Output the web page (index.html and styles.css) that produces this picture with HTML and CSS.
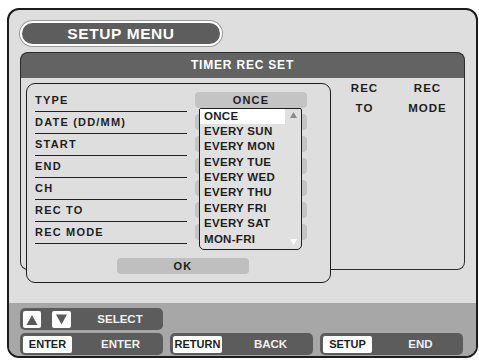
FILE: index.html
```html
<!DOCTYPE html>
<html>
<head>
<meta charset="utf-8">
<link rel="stylesheet" href="styles.css">
</head>
<body>
<div class="screen">
  <div class="title">SETUP MENU</div>
  <div class="panel">
    <div class="panel-head">TIMER REC SET</div>
    <div class="panel-body">
      <div class="dialog">
        <div class="rows">
          <div class="row"><span class="label">TYPE</span><span class="value">ONCE</span></div>
          <div class="row"><span class="label">DATE (DD/MM)</span><span class="value"></span></div>
          <div class="row"><span class="label">START</span><span class="value"></span></div>
          <div class="row"><span class="label">END</span><span class="value"></span></div>
          <div class="row"><span class="label">CH</span><span class="value"></span></div>
          <div class="row"><span class="label">REC TO</span><span class="value"></span></div>
          <div class="row"><span class="label">REC MODE</span><span class="value"></span></div>
        </div>
        <div class="ok">OK</div>
        <div class="dropdown">
          <ul class="dd-list">
            <li class="dd-item selected">ONCE</li>
            <li class="dd-item">EVERY SUN</li>
            <li class="dd-item">EVERY MON</li>
            <li class="dd-item">EVERY TUE</li>
            <li class="dd-item">EVERY WED</li>
            <li class="dd-item">EVERY THU</li>
            <li class="dd-item">EVERY FRI</li>
            <li class="dd-item">EVERY SAT</li>
            <li class="dd-item">MON-FRI</li>
          </ul>
          <div class="dd-scroll">
            <svg class="dd-arrow" width="7" height="6" viewBox="0 0 7 6"><polygon points="0,6 7,6 3.5,0" fill="#8a8a8a"/></svg>
            <svg class="dd-arrow" width="7" height="6" viewBox="0 0 7 6"><polygon points="0,0 7,0 3.5,6" fill="#ffffff"/></svg>
          </div>
        </div>
      </div>
      <div class="cols">
        <div class="col">REC<br>TO</div>
        <div class="col">REC<br>MODE</div>
      </div>
    </div>
  </div>
  <div class="keys">
    <div class="key-row">
      <div class="key">
        <span class="btn arrow"><svg width="18" height="17" viewBox="0 0 18 17"><polygon points="3.5,14 14.5,14 9,4" fill="#5a5a5a"/></svg></span>
        <span class="btn arrow second"><svg width="19" height="17" viewBox="0 0 19 17"><polygon points="4,3.5 15,3.5 9.5,13.5" fill="#5a5a5a"/></svg></span>
        <span class="key-label">SELECT</span>
      </div>
    </div>
    <div class="key-row">
      <div class="key"><span class="btn">ENTER</span><span class="key-label">ENTER</span></div>
      <div class="key"><span class="btn">RETURN</span><span class="key-label">BACK</span></div>
      <div class="key"><span class="btn">SETUP</span><span class="key-label">END</span></div>
    </div>
  </div>
</div>
</body>
</html>
```

FILE: styles.css
```css
body {
  margin: 0;
  background: #ffffff;
  font-family: "Liberation Sans", Arial, sans-serif;
  font-weight: bold;
  color: #1e1e1e;
}

.screen {
  margin: 8px 0 0 7px;
  width: 471px;
  height: 350px;
  box-sizing: border-box;
  border: 2px solid #1c1c1c;
  border-radius: 12px;
  background: #dedede;
  display: flex;
  flex-direction: column;
  overflow: hidden;
}

.title {
  margin: 11px 0 0 11px;
  width: 202px;
  height: 25px;
  box-sizing: border-box;
  border: 2px solid #ffffff;
  border-radius: 13px;
  background: #5d5d5d;
  box-shadow: 0 0 0 1px #9a9a9a;
  color: #ffffff;
  font-size: 15.5px;
  letter-spacing: 0.6px;
  line-height: 21px;
  text-align: center;
}

.panel {
  margin: 6px 0 0 11px;
  width: 445px;
}

.panel-head {
  height: 26px;
  box-sizing: border-box;
  border: 1.5px solid #2b2b2b;
  border-bottom: none;
  border-radius: 8px 8px 0 0;
  background: #636363;
  color: #ffffff;
  font-size: 12px;
  letter-spacing: 0.8px;
  line-height: 25px;
  text-align: center;
}

.panel-body {
  height: 192px;
  box-sizing: border-box;
  border: 1.5px solid #2b2b2b;
  border-top: none;
  border-radius: 0 0 8px 8px;
  display: flex;
  align-items: flex-start;
}

.dialog {
  position: relative;
  margin: 5px 0 0 4.5px;
  width: 305px;
  height: 200px;
  flex: none;
  box-sizing: border-box;
  border: 1.5px solid #1e1e1e;
  border-radius: 9px;
  background: #dedede;
  padding: 5.5px 0 0 8.5px;
}

.rows {
  display: flex;
  flex-direction: column;
}

.row {
  display: flex;
  height: 22px;
}

.label {
  width: 152px;
  height: 22px;
  box-sizing: border-box;
  border-bottom: 1.5px solid #222222;
  font-size: 11px;
  letter-spacing: 1.2px;
  line-height: 21px;
}

.value {
  margin: 2px 0 0 8px;
  width: 112px;
  height: 16px;
  border-radius: 4px;
  background: #c4c4c4;
  font-size: 11px;
  letter-spacing: 1.2px;
  line-height: 16px;
  text-align: center;
}

.ok {
  margin: 14px 0 0 82px;
  width: 132px;
  height: 16px;
  border-radius: 4px;
  background: #bfbfbf;
  font-size: 11px;
  letter-spacing: 1.2px;
  line-height: 16px;
  text-align: center;
}

.dropdown {
  position: absolute;
  left: 172.5px;
  top: 23.5px;
  width: 103px;
  height: 142px;
  box-sizing: border-box;
  border: 1.5px solid #1e1e1e;
  border-radius: 2px 2px 5px 5px;
  background: #e0e0e0;
  display: flex;
}

.dd-list {
  margin: 0;
  padding: 0;
  list-style: none;
  width: 85px;
}

.dd-item {
  height: 15.4px;
  padding-left: 4px;
  font-size: 11.5px;
  letter-spacing: 0.3px;
  line-height: 15.4px;
  white-space: nowrap;
}

.dd-item.selected {
  background: #ffffff;
}

.dd-scroll {
  flex: 1;
  display: flex;
  flex-direction: column;
  justify-content: space-between;
  align-items: center;
  padding: 3px 0 4px;
}

.dd-arrow {
  display: block;
}

.cols {
  margin-left: 4px;
  padding-top: 0;
  display: flex;
  gap: 3px;
}

.col {
  width: 60px;
  font-size: 11.5px;
  letter-spacing: 1px;
  line-height: 20px;
  text-align: center;
}

.keys {
  margin-top: auto;
  height: 53px;
  box-sizing: border-box;
  background: #a7a7a7;
  padding: 5px 0 0 11px;
  display: flex;
  flex-direction: column;
  gap: 3px;
}

.key-row {
  display: flex;
  gap: 7px;
}

.key {
  width: 143px;
  height: 22px;
  box-sizing: border-box;
  padding-left: 3px;
  border-radius: 5px;
  background: #5c5c5c;
  display: flex;
  align-items: center;
}

.btn {
  width: 49px;
  height: 17px;
  border-radius: 2px;
  background: #ffffff;
  color: #1e1e1e;
  font-size: 11px;
  line-height: 17px;
  text-align: center;
}

.btn.arrow {
  width: 18px;
  display: flex;
}

.btn.arrow.second {
  width: 19px;
  margin-left: 11px;
}

.key-label {
  flex: 1;
  padding-left: 6px;
  color: #f0f0f0;
  font-size: 11.5px;
  text-align: center;
}
```
